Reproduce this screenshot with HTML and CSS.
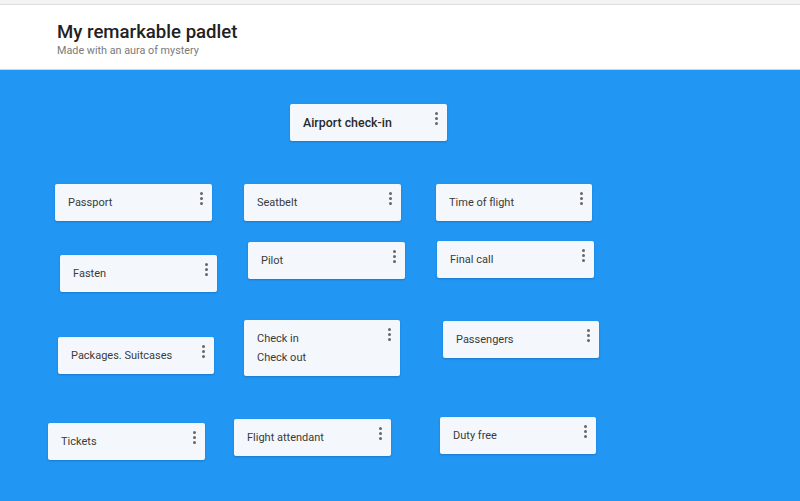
FILE: index.html
```html
<!DOCTYPE html>
<html>
<head>
<meta charset="utf-8">
<link rel="stylesheet" href="styles.css">
</head>
<body>
<div class="topstrip"></div>
<header class="header">
  <h1 class="title">My remarkable padlet</h1>
  <p class="subtitle">Made with an aura of mystery</p>
</header>
<main class="canvas">
  <div class="card card-main" style="left:290px;top:34px;width:157px">
    <div class="card-body">Airport check-in</div><span class="dots"><i></i><i></i><i></i></span>
  </div>
  <div class="card" style="left:55px;top:114px;width:157px">
    <div class="card-body">Passport</div><span class="dots"><i></i><i></i><i></i></span>
  </div>
  <div class="card" style="left:244px;top:114px;width:157px">
    <div class="card-body">Seatbelt</div><span class="dots"><i></i><i></i><i></i></span>
  </div>
  <div class="card" style="left:436px;top:114px;width:156px">
    <div class="card-body">Time of flight</div><span class="dots"><i></i><i></i><i></i></span>
  </div>
  <div class="card" style="left:60px;top:185px;width:157px">
    <div class="card-body">Fasten</div><span class="dots"><i></i><i></i><i></i></span>
  </div>
  <div class="card" style="left:248px;top:172px;width:157px">
    <div class="card-body">Pilot</div><span class="dots"><i></i><i></i><i></i></span>
  </div>
  <div class="card" style="left:437px;top:171px;width:157px">
    <div class="card-body">Final call</div><span class="dots"><i></i><i></i><i></i></span>
  </div>
  <div class="card" style="left:58px;top:267px;width:156px">
    <div class="card-body">Packages. Suitcases</div><span class="dots"><i></i><i></i><i></i></span>
  </div>
  <div class="card" style="left:244px;top:250px;width:156px">
    <div class="card-body">Check in<br>Check out</div><span class="dots"><i></i><i></i><i></i></span>
  </div>
  <div class="card" style="left:443px;top:251px;width:156px">
    <div class="card-body">Passengers</div><span class="dots"><i></i><i></i><i></i></span>
  </div>
  <div class="card" style="left:48px;top:353px;width:157px">
    <div class="card-body">Tickets</div><span class="dots"><i></i><i></i><i></i></span>
  </div>
  <div class="card" style="left:234px;top:349px;width:157px">
    <div class="card-body">Flight attendant</div><span class="dots"><i></i><i></i><i></i></span>
  </div>
  <div class="card" style="left:440px;top:347px;width:156px">
    <div class="card-body">Duty free</div><span class="dots"><i></i><i></i><i></i></span>
  </div>
</main>
</body>
</html>
```
FILE: styles.css
```css
html, body {
  margin: 0;
  padding: 0;
  height: 100%;
  overflow: hidden;
}
body {
  font-family: Roboto, "Noto Sans", Arial, sans-serif;
  background: #2196f3;
  display: flex;
  flex-direction: column;
}
.topstrip {
  height: 4px;
  background: #f3f3f3;
  border-bottom: 1px solid #dcdcdc;
}
.header {
  background: #ffffff;
  height: 65px;
  padding-left: 57px;
  box-sizing: border-box;
  padding-top: 16px;
  border-bottom: 1px solid #c9d6e2;
}
.title {
  margin: 0;
  font-size: 18.6px;
  font-weight: 500;
  color: #222;
  line-height: 22px;
}
.subtitle {
  margin: 1px 0 0;
  font-size: 10.8px;
  color: #7a7a7a;
  line-height: 13px;
}
.canvas {
  position: relative;
  flex: 1;
  background: #2196f3;
}
.card {
  position: absolute;
  background: #f4f8fd;
  border-radius: 2px;
  box-shadow: 0 1px 2px rgba(0, 40, 90, 0.25);
  display: flex;
  align-items: flex-start;
  box-sizing: border-box;
}
.card-body {
  flex: 1;
  padding: 9px 0 9px 13px;
  font-size: 11px;
  line-height: 19px;
  color: #3a3a3a;
}
.card-main .card-body {
  font-size: 12.4px;
  font-weight: 500;
  color: #2a2a2a;
}
.dots {
  display: flex;
  flex-direction: column;
  gap: 2px;
  padding: 8px 9px 0 0;
}
.dots i {
  display: block;
  width: 3px;
  height: 3px;
  border-radius: 50%;
  background: #666;
}
```
